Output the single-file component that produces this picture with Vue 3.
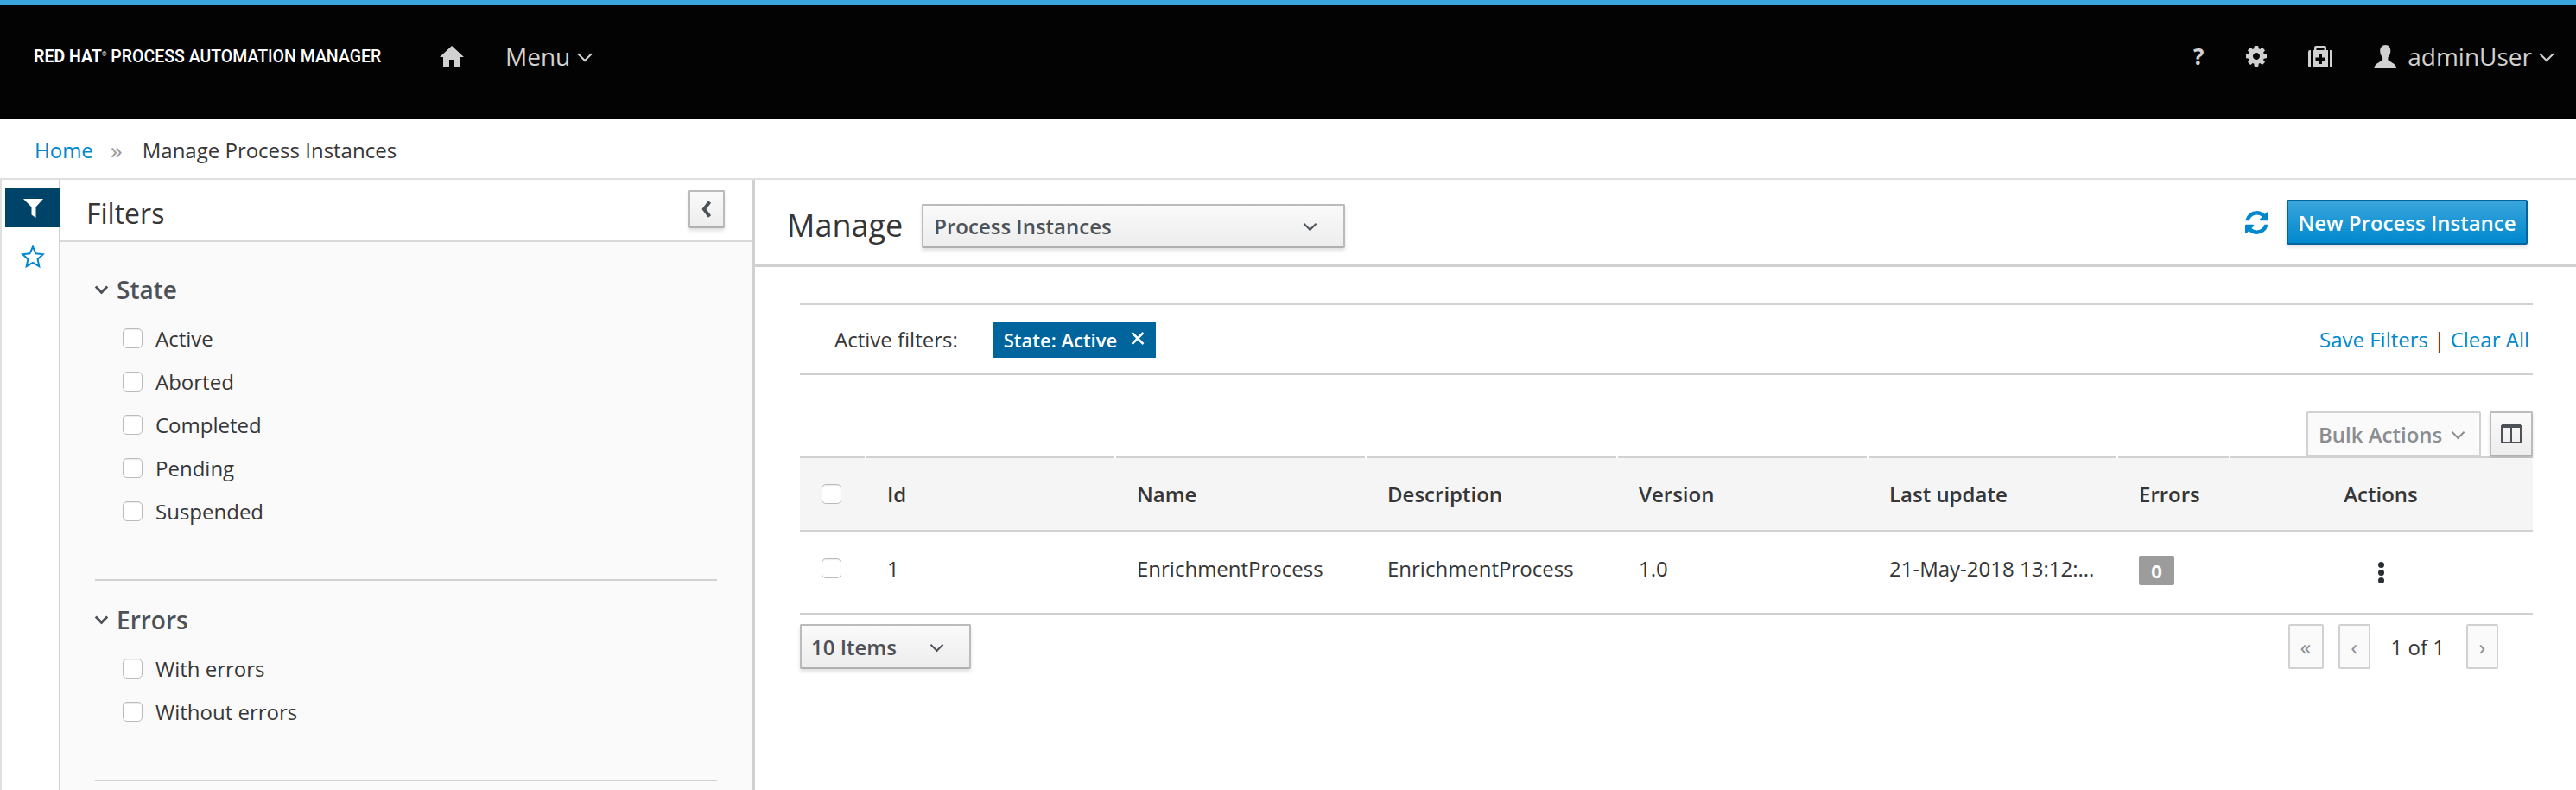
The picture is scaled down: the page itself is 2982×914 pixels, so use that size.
<template>
  <div class="app">
    <header class="topbar">
      <div class="brand"><b>RED HAT</b><sup>®</sup> PROCESS AUTOMATION MANAGER</div>
      <svg class="home-icon" viewBox="0 0 28 24"><path d="M14 0 28 13h-4v11h-7v-8h-6v8H4V13H0z" /></svg>
      <span class="menu">Menu<i class="chev chev-nav"></i></span>
      <div class="utility">
        <span class="help">?</span>
        <svg class="gear" viewBox="0 -128 1536 1536"><path d="M1024 640q0-106-75-181t-181-75-181 75-75 181 75 181 181 75 181-75 75-181zm512-109v222q0 12-8 23t-20 13l-185 28q-19 54-39 91 35 50 107 138 10 12 10 25t-9 23q-27 37-99 108t-94 71q-12 0-26-9l-138-108q-44 23-91 38-16 136-29 186-7 28-36 28h-222q-14 0-24.5-8.5t-11.5-21.5l-28-184q-49-16-90-37l-141 107q-10 9-25 9-14 0-25-11-126-114-165-168-7-10-7-23 0-12 8-23 15-21 51-66.5t54-70.5q-27-50-41-99l-183-27q-13-2-21-12.5t-8-23.5v-222q0-12 8-23t19-13l186-28q14-46 39-92-40-57-107-138-10-12-10-24 0-10 9-23 26-36 98.5-107.5t94.5-71.5q13 0 26 10l138 107q44-23 91-38 16-136 29-186 7-28 36-28h222q14 0 24.5 8.5t11.5 21.5l28 184q49 16 90 37l142-107q9-9 24-9 13 0 25 10 129 119 165 170 7 8 7 22 0 12-8 23-15 21-51 66.5t-54 70.5q26 50 41 98l183 28q13 2 21 12.5t8 23.5z" /></svg>
        <svg class="medkit" viewBox="0 0 28 25"><path fill-rule="evenodd" d="M9 0h10q2 0 2 2v3h-2.500V2.500h-9V5H7V2q0-2 2-2zM3 5v20H2q-2 0-2-2V7q0-2 2-2zM25 5h1q2 0 2 2v16q0 2-2 2h-1zM5 5h18v20H5zM12 10v3.500H8.500v4H12V21h4v-3.500h3.500v-4H16V10z" /></svg>
        <span class="user">
          <svg class="user-icon" viewBox="0 0 27 28"><path d="M13.500 0c4 0 6 3 6 7 0 3-1 6-3 8v3c1 2 10 4 10 10H0c0-6 9-8 10-10v-3c-2-2-3-5-3-8 0-4 2.500-7 6.500-7z" /></svg>
          adminUser<i class="chev chev-nav"></i>
        </span>
      </div>
    </header>

    <nav class="crumbs">
      <a class="link">Home</a>
      <span class="crumb-sep">»</span>
      <span>Manage Process Instances</span>
    </nav>

    <main class="layout">
      <aside class="rail">
        <div class="rail-item active">
          <svg viewBox="0 0 23 22" class="funnel"><path d="M0 0h23l-8.500 9.500V22l-5-3.500V9.500z" /></svg>
        </div>
        <div class="rail-item">
          <svg viewBox="0 0 28 28" class="star"><path d="M14 2.500l3.500 7.800 8.300.9-6.200 5.700 1.700 8.300L14 20.900l-7.300 4.300 1.700-8.300-6.200-5.700 8.300-.9z" /></svg>
        </div>
      </aside>

      <section class="filters">
        <div class="filters-head">
          <h2>Filters</h2>
          <button class="btn collapse-btn"><svg viewBox="0 0 12 20"><path d="M9.500 1.500 3 10l6.500 8.500" /></svg></button>
        </div>
        <div class="filters-body">
          <div v-for="group in filterGroups" :key="group.title" class="filter-group">
            <h3><i class="chev chev-group"></i>{{ group.title }}</h3>
            <label v-for="opt in group.options" :key="opt" class="filter-opt">
              <span class="check"></span>{{ opt }}
            </label>
          </div>
        </div>
      </section>

      <section class="content">
        <div class="content-head">
          <span class="title">Manage</span>
          <div class="btn select select-type">
            <span>Process Instances</span><i class="chev chev-small"></i>
          </div>
          <svg class="refresh" viewBox="0 0 1536 1536"><path d="M1511 928q0 5-1 7-64 268-268 434.500t-478 166.500q-146 0-282.500-55t-243.500-157l-129 129q-19 19-45 19t-45-19-19-45v-448q0-26 19-45t45-19h448q26 0 45 19t19 45-19 45l-137 137q71 66 161 102t187 36q134 0 250-65t186-179q11-17 53-117 8-23 30-23h192q13 0 22.500 9.500t9.500 22.500zm25-800v448q0 26-19 45t-45 19h-448q-26 0-45-19t-19-45 19-45l138-138q-148-137-349-137-134 0-250 65t-186 179q-11 17-53 117-8 23-30 23h-199q-13 0-22.500-9.500t-9.500-22.500v-7q65-268 270-434.500t480-166.500q146 0 284 55.500t245 156.500l130-129q19-19 45-19t45 19 19 45z" /></svg>
          <button class="btn primary">New Process Instance</button>
        </div>

        <div class="content-body">
          <div class="active-filters">
            <span>Active filters:</span>
            <span class="tag">State: Active<svg viewBox="0 0 16 15"><path d="M1.500 1l13 13m0-13l-13 13" /></svg></span>
            <span class="filter-links"><a class="link">Save Filters</a> | <a class="link">Clear All</a></span>
          </div>

          <div class="table-tools">
            <div class="btn bulk">Bulk Actions<i class="chev chev-small"></i></div>
            <button class="btn columns-btn"><svg viewBox="0 0 24 22"><path d="M1 2h22v19H1zM12 2v19" /><path d="M1 2h22" class="thick" /></svg></button>
          </div>

          <table class="grid">
            <colgroup>
              <col v-for="w in colWidths" :key="w.key" :style="{ width: w.px + 'px' }" />
            </colgroup>
            <thead>
              <tr>
                <th class="cell-check"><span class="check"></span></th>
                <th v-for="col in columns" :key="col" :class="{ center: col === 'Actions' }">{{ col }}</th>
              </tr>
            </thead>
            <tbody>
              <tr>
                <td class="cell-check"><span class="check"></span></td>
                <td>1</td>
                <td>EnrichmentProcess</td>
                <td>EnrichmentProcess</td>
                <td>1.0</td>
                <td>21-May-2018 13:12:...</td>
                <td class="cell-badge"><span class="badge">0</span></td>
                <td class="center"><span class="kebab"><i></i><i></i><i></i></span></td>
              </tr>
            </tbody>
          </table>

          <div class="table-foot">
            <div class="btn select select-items"><span>10 Items</span><i class="chev chev-small"></i></div>
            <div class="pager">
              <span class="page-btn wide">«</span>
              <span class="page-btn">‹</span>
              <span class="page-text">1 of 1</span>
              <span class="page-btn">›</span>
            </div>
          </div>
        </div>
      </section>
    </main>
  </div>
</template>

<script setup>
const filterGroups = [
  { title: 'State', options: ['Active', 'Aborted', 'Completed', 'Pending', 'Suspended'] },
  { title: 'Errors', options: ['With errors', 'Without errors'] }
]

const columns = ['Id', 'Name', 'Description', 'Version', 'Last update', 'Errors', 'Actions']

const colWidths = [
  { key: 'check', px: 75 },
  { key: 'id', px: 289 },
  { key: 'name', px: 290 },
  { key: 'description', px: 291 },
  { key: 'version', px: 290 },
  { key: 'update', px: 289 },
  { key: 'errors', px: 130 },
  { key: 'actions', px: 352 }
]
</script>

<style>
html, body {
  margin: 0;
  background: #fff;
  overflow: hidden;
}
</style>

<style scoped>
.app {
  height: 914px;
  display: flex;
  flex-direction: column;
  font-family: "Open Sans", "Liberation Sans", sans-serif;
  font-size: 24px;
  color: #363636;
  overflow: hidden;
}

/* top bar */
.topbar {
  height: 138px;
  flex: none;
  box-sizing: border-box;
  border-top: 6px solid #39a5dc;
  background: #030303;
  color: #d1d1d1;
  display: flex;
  align-items: center;
  padding: 0 26px 14px 39px;
}
.brand {
  width: 470px;
  flex: none;
  font-family: Roboto, sans-serif;
  font-size: 19.5px;
  font-weight: 500;
  color: #fff;
  white-space: nowrap;
}
.brand sup {
  font-size: 7px;
}
.home-icon {
  width: 28px;
  height: 24px;
  fill: #d1d1d1;
  flex: none;
}
.menu {
  margin-left: 48px;
  font-size: 28px;
  display: flex;
  align-items: center;
}
.utility {
  margin-left: auto;
  display: flex;
  align-items: center;
}
.help {
  font-weight: 700;
  font-size: 26px;
  width: 16px;
  text-align: center;
}
.gear {
  width: 24px;
  height: 24px;
  fill: #d1d1d1;
  margin-left: 47px;
}
.medkit {
  width: 28px;
  height: 25px;
  fill: #d1d1d1;
  margin-left: 48px;
}
.user {
  display: flex;
  align-items: center;
  margin-left: 48px;
  font-size: 28px;
}
.user-icon {
  width: 27px;
  height: 27px;
  fill: #d1d1d1;
  margin-right: 12px;
}

/* chevrons */
.chev {
  display: inline-block;
  border-right: 2px solid currentColor;
  border-bottom: 2px solid currentColor;
  transform: rotate(45deg);
}
.chev-nav {
  width: 10px;
  height: 10px;
  margin: -4px 2px 0 11px;
}
.chev-group {
  width: 8px;
  height: 8px;
  border-width: 3px;
  margin: -6px 12px 0 2px;
  color: #4d5258;
}
.chev-small {
  width: 9px;
  height: 9px;
  margin-top: -4px;
  color: #4d5258;
}

/* breadcrumb */
.crumbs {
  height: 68px;
  flex: none;
  box-sizing: border-box;
  padding: 2px 0 0 40px;
  display: flex;
  align-items: center;
  background: #fff;
}
.link {
  color: #0088ce;
}
.crumb-sep {
  color: #9c9c9c;
  font-size: 28px;
  margin: 0 23px 0 20px;
}

/* main layout */
.layout {
  flex: 1;
  display: flex;
  min-height: 0;
  border-top: 2px solid #e0e0e0;
}
.rail {
  width: 70px;
  flex: none;
  box-sizing: border-box;
  border-left: 2px solid #e0e0e0;
  border-right: 2px solid #d1d1d1;
  padding-top: 10px;
  position: relative;
}
.rail-item {
  height: 45px;
  margin-left: 4px;
  margin-right: -2px;
  display: flex;
  align-items: center;
  justify-content: center;
  position: relative;
}
.rail-item.active {
  background: #004368;
  margin-bottom: 11px;
}
.funnel {
  width: 23px;
  height: 22px;
  fill: #fff;
}
.star {
  width: 28px;
  height: 28px;
  fill: none;
  stroke: #0088ce;
  stroke-width: 2;
}

/* filter panel */
.filters {
  width: 804px;
  flex: none;
  box-sizing: border-box;
  border-right: 3px solid #d1d1d1;
  display: flex;
  flex-direction: column;
}
.filters-head {
  height: 72px;
  flex: none;
  box-sizing: border-box;
  border-bottom: 2px solid #d9d9d9;
  padding: 0 32px 0 30px;
  display: flex;
  align-items: center;
  justify-content: space-between;
}
.filters-head h2 {
  margin: 6px 0 0;
  font-size: 32px;
  font-weight: 400;
}
.collapse-btn {
  width: 42px;
  height: 44px;
  margin-top: -2px;
  padding: 0;
  display: flex;
  align-items: center;
  justify-content: center;
}
.collapse-btn svg {
  width: 12px;
  height: 20px;
  fill: none;
  stroke: #4d5258;
  stroke-width: 4;
}
.filters-body {
  flex: 1;
  background: #fafafa;
  padding: 35px 41px 0 40px;
}
.filter-group {
  padding-bottom: 54px;
  border-bottom: 2px solid #d1d1d1;
  margin-bottom: 25px;
}
.filter-group h3 {
  margin: 0 0 11px;
  height: 40px;
  font-size: 28px;
  font-weight: 600;
  color: #4d5258;
  display: flex;
  align-items: center;
}
.filter-opt {
  height: 50px;
  display: flex;
  align-items: center;
  padding-left: 32px;
}
.check {
  width: 23px;
  height: 23px;
  box-sizing: border-box;
  flex: none;
  display: block;
  background: #fff;
  border: 1px solid #bbb;
  border-radius: 5px;
  box-shadow: inset 0 1px 1px rgba(0, 0, 0, 0.08);
}
.filter-opt .check {
  margin-right: 15px;
}

/* content */
.content {
  flex: 1;
  min-width: 0;
  display: flex;
  flex-direction: column;
}
.content-head {
  height: 101px;
  flex: none;
  box-sizing: border-box;
  border-bottom: 3px solid #d1d1d1;
  padding: 0 56px 0 37px;
  display: flex;
  align-items: center;
}
.title {
  font-size: 36px;
  margin: 6px 22px 0 0;
}
.btn {
  box-sizing: border-box;
  background: linear-gradient(to bottom, #fafafa, #ededed);
  border: 2px solid #bbb;
  border-bottom-color: #b0b0b0;
  border-radius: 2px;
  box-shadow: 0 3px 4px rgba(3, 3, 3, 0.12);
  color: #4d5258;
  font-family: inherit;
  font-size: 24px;
}
.select {
  display: flex;
  align-items: center;
  justify-content: space-between;
  font-weight: 600;
}
.select-type {
  width: 490px;
  height: 51px;
  margin-top: 9px;
  padding: 0 33px 0 12px;
}
.select-items {
  width: 198px;
  height: 52px;
  padding: 0 32px 0 11px;
}
.refresh {
  width: 27px;
  height: 27px;
  fill: #0088ce;
  margin-left: auto;
  margin-right: 21px;
}
.primary {
  width: 279px;
  height: 52px;
  padding: 0;
  background: linear-gradient(to bottom, #39a5dc, #0088ce);
  border-color: #00659c;
  color: #fff;
  font-weight: 600;
}

.content-body {
  padding: 42px 50px 0 52px;
}
.active-filters {
  height: 83px;
  box-sizing: border-box;
  border-top: 2px solid #d1d1d1;
  border-bottom: 2px solid #d1d1d1;
  padding: 0 4px 0 40px;
  display: flex;
  align-items: center;
}
.tag {
  margin-left: 40px;
  height: 42px;
  width: 189px;
  box-sizing: border-box;
  padding-left: 13px;
  background: #00659c;
  color: #fff;
  font-weight: 600;
  font-size: 22px;
  display: flex;
  align-items: center;
}
.tag svg {
  width: 16px;
  height: 15px;
  margin: -2px 0 0 16px;
  fill: none;
  stroke: #fff;
  stroke-width: 2.500;
}
.filter-links {
  margin-left: auto;
}

.table-tools {
  margin-top: 42px;
  display: flex;
  justify-content: flex-end;
  gap: 10px;
}
.bulk {
  width: 202px;
  height: 52px;
  padding: 0 19px 0 12px;
  display: flex;
  align-items: center;
  justify-content: space-between;
  background: #fafafa;
  border-color: #d1d1d1;
  color: #8b8d8f;
  font-weight: 600;
  box-shadow: none;
}
.bulk .chev {
  color: #8b8d8f;
}
.columns-btn {
  width: 50px;
  height: 52px;
  padding: 0;
  display: flex;
  align-items: center;
  justify-content: center;
}
.columns-btn svg {
  width: 24px;
  height: 22px;
  fill: none;
  stroke: #4d5258;
  stroke-width: 2;
}
.columns-btn .thick {
  stroke-width: 4;
}

/* table */
.grid {
  width: 2006px;
  table-layout: fixed;
  border-collapse: collapse;
}
.grid th {
  position: relative;
  height: 83px;
  padding: 0 0 0 26px;
  text-align: left;
  font-weight: 600;
  background: #f5f5f5;
  border-top: 2px solid #d1d1d1;
  border-bottom: 2px solid #d1d1d1;
}
.grid th + th::before {
  content: "";
  position: absolute;
  left: 0;
  top: -2px;
  width: 2px;
  height: 2px;
  background: #fff;
}
.grid td {
  height: 84px;
  padding: 0 0 10px 26px;
  border-bottom: 2px solid #d1d1d1;
  white-space: nowrap;
}
.grid td.cell-badge {
  padding-bottom: 7px;
}
.grid th.center,
.grid td.center {
  padding-left: 0;
  text-align: center;
}
.grid td.center {
  padding-bottom: 5px;
}
.grid .cell-check {
  padding-left: 25px;
}
.badge {
  display: inline-block;
  width: 41px;
  height: 34px;
  line-height: 34px;
  text-align: center;
  background: #9c9c9c;
  border-radius: 2px;
  color: #fff;
  font-size: 22px;
  font-weight: 700;
  vertical-align: middle;
}
.kebab {
  display: inline-flex;
  flex-direction: column;
  gap: 2px;
  vertical-align: middle;
}
.kebab i {
  width: 7px;
  height: 7px;
  border-radius: 50%;
  background: #292e34;
}

/* footer row */
.table-foot {
  margin-top: 11px;
  display: flex;
  align-items: flex-start;
  justify-content: space-between;
}
.pager {
  display: flex;
  align-items: center;
  margin-right: 40px;
}
.page-btn {
  width: 37px;
  height: 52px;
  box-sizing: border-box;
  border: 2px solid #d1d1d1;
  border-radius: 2px;
  background: #fafafa;
  color: #8b8d8f;
  display: flex;
  align-items: center;
  justify-content: center;
  font-size: 26px;
  line-height: 1;
}
.page-btn.wide {
  width: 41px;
  margin-right: 17px;
}
.page-text {
  margin: 0 25px 0 24px;
}
</style>
